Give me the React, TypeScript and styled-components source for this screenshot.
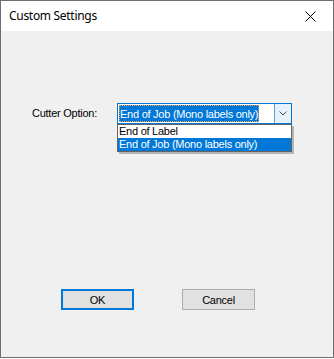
import React from "react";
import styled, { createGlobalStyle } from "styled-components";

const Global = createGlobalStyle`
  html, body { margin: 0; padding: 0; background: #ffffff; }
  * { box-sizing: border-box; }
`;

const Window = styled.div`
  width: 334px;
  height: 358px;
  border: 1px solid #6f6f6f;
  display: flex;
  flex-direction: column;
  background: #f0f0f0;
  font-family: "Liberation Sans", Arial, sans-serif;
  font-size: 11px;
  letter-spacing: -0.25px;
  color: #000;
`;

const TitleBar = styled.div`
  height: 30px;
  background: #ffffff;
  display: flex;
  align-items: center;
  justify-content: space-between;
  padding: 0 0 0 8px;
`;

const Title = styled.span`
  font-family: "Noto Sans", "Open Sans", sans-serif;
  font-size: 12px;
  letter-spacing: -0.3px;
  color: #000;
  padding-bottom: 1px;
`;

const CloseButton = styled.div`
  width: 46px;
  height: 30px;
  display: flex;
  align-items: center;
  justify-content: center;
`;

const Content = styled.div`
  flex: 1;
  display: flex;
  flex-direction: column;
  padding: 72px 0 0 31px;
`;

const FieldRow = styled.div`
  display: flex;
  align-items: center;
  height: 21px;
`;

const Label = styled.span`
  width: 85px;
  padding-bottom: 1px;
`;

const Combo = styled.div`
  position: relative;
  width: 175px;
  height: 21px;
  border: 1px solid #0078d7;
  background: #ffffff;
  display: flex;
  align-items: stretch;
`;

const ComboText = styled.div`
  flex: 1;
  padding: 1px 1px;
  display: flex;
  align-items: stretch;
`;

const Selection = styled.span`
  background: #0078d7;
  color: #ffffff;
  padding: 0 1px;
  display: flex;
  align-items: center;
  outline: 1px dotted #ff9f3f;
  outline-offset: -1px;
`;

const DropButton = styled.div`
  width: 17px;
  background: #e5f1fb;
  border-left: 1px solid #569de5;
  display: flex;
  align-items: center;
  justify-content: center;
`;

const DropList = styled.ul`
  position: absolute;
  left: -1px;
  top: 20px;
  width: 175px;
  margin: 0;
  padding: 0;
  list-style: none;
  border: 1px solid #646464;
  background: #ffffff;
  box-shadow: 2px 2px 0 rgba(0, 0, 0, 0.25);
`;

const ListItem = styled.li<{ $selected?: boolean }>`
  height: 13px;
  line-height: 13px;
  padding: 0 1px;
  background: ${(p) => (p.$selected ? "#0078d7" : "#ffffff")};
  color: ${(p) => (p.$selected ? "#ffffff" : "#000000")};
`;

const ButtonRow = styled.div`
  display: flex;
  gap: 48px;
  margin-top: 165px;
  padding-left: 29px;
`;

const DialogButton = styled.div<{ $default?: boolean }>`
  width: 73px;
  height: 21px;
  background: #e1e1e1;
  border: ${(p) => (p.$default ? "2px solid #0078d7" : "1px solid #adadad")};
  display: flex;
  align-items: center;
  justify-content: center;
`;

export default function App() {
  return (
    <>
      <Global />
      <Window>
        <TitleBar>
          <Title>Custom Settings</Title>
          <CloseButton>
            <svg width="11" height="11" viewBox="0 0 11 11">
              <path d="M0.5 0.5 L10.5 10.5 M10.5 0.5 L0.5 10.5" stroke="#000" strokeWidth="1" />
            </svg>
          </CloseButton>
        </TitleBar>
        <Content>
          <FieldRow>
            <Label>Cutter Option:</Label>
            <Combo>
              <ComboText>
                <Selection>End of Job (Mono labels only)</Selection>
              </ComboText>
              <DropButton>
                <svg width="8" height="5" viewBox="0 0 8 5">
                  <path d="M0.5 0.5 L4 4 L7.5 0.5" stroke="#505050" strokeWidth="1" fill="none" />
                </svg>
              </DropButton>
              <DropList>
                <ListItem>End of Label</ListItem>
                <ListItem $selected>End of Job (Mono labels only)</ListItem>
              </DropList>
            </Combo>
          </FieldRow>
          <ButtonRow>
            <DialogButton $default>OK</DialogButton>
            <DialogButton>Cancel</DialogButton>
          </ButtonRow>
        </Content>
      </Window>
    </>
  );
}
